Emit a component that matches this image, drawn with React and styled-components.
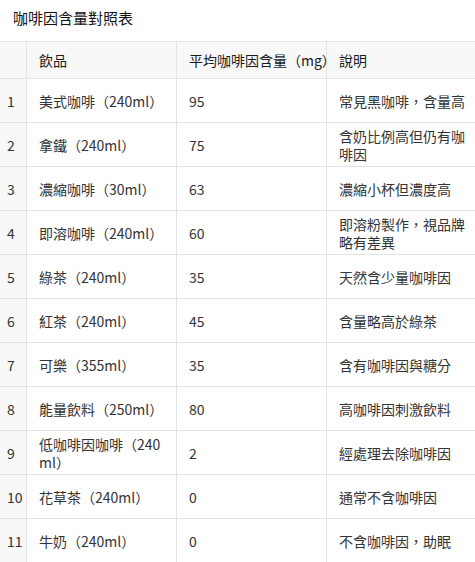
import React from 'react';
import styled, { createGlobalStyle } from 'styled-components';

const GlobalStyle = createGlobalStyle`
  html, body {
    margin: 0;
    padding: 0;
    background: #ffffff;
    overflow: hidden;
  }
  body {
    font-family: "Noto Sans CJK TC", "Noto Sans", "Liberation Sans", sans-serif;
    color: #333;
  }
`;

const Page = styled.div`
  width: 475px;
  height: 562px;
  overflow: hidden;
`;

const Title = styled.div`
  height: 41px;
  box-sizing: border-box;
  padding: 6px 0 0 13px;
  font-size: 15px;
  font-weight: 400;
  color: #111;
  line-height: 24px;
`;

const Grid = styled.div`
  display: grid;
  grid-template-columns: 27px 150px 150px 150px;
  grid-template-rows: 37px;
  grid-auto-rows: 44px;
  width: 477px;
  border-top: 1px solid #e3e3e3;
`;

const Cell = styled.div`
  display: flex;
  align-items: center;
  box-sizing: border-box;
  padding: 0 ${p => (p.index ? '0 0 7px' : '11px 0 12px')};
  border-bottom: 1px solid #e3e3e3;
  border-right: 1px solid #e3e3e3;
  background: ${p => (p.head || p.index ? '#f8f8f8' : '#ffffff')};
  font-size: 14px;
  line-height: 18px;
  color: ${p => (p.head ? '#1a1a1a' : '#333')};
  white-space: ${p => (p.head ? 'nowrap' : 'normal')};
  word-break: break-all;
`;

const rows = [
  ['美式咖啡（240ml）', '95', '常見黑咖啡，含量高'],
  ['拿鐵（240ml）', '75', '含奶比例高但仍有咖啡因'],
  ['濃縮咖啡（30ml）', '63', '濃縮小杯但濃度高'],
  ['即溶咖啡（240ml）', '60', '即溶粉製作，視品牌略有差異'],
  ['綠茶（240ml）', '35', '天然含少量咖啡因'],
  ['紅茶（240ml）', '45', '含量略高於綠茶'],
  ['可樂（355ml）', '35', '含有咖啡因與糖分'],
  ['能量飲料（250ml）', '80', '高咖啡因刺激飲料'],
  ['低咖啡因咖啡（240ml）', '2', '經處理去除咖啡因'],
  ['花草茶（240ml）', '0', '通常不含咖啡因'],
  ['牛奶（240ml）', '0', '不含咖啡因，助眠'],
];

export default function App() {
  return (
    <Page>
      <GlobalStyle />
      <Title>咖啡因含量對照表</Title>
      <Grid>
        <Cell index head />
        <Cell head>飲品</Cell>
        <Cell head>平均咖啡因含量（mg）</Cell>
        <Cell head>說明</Cell>
        {rows.map((r, i) => (
          <React.Fragment key={i}>
            <Cell index>{i + 1}</Cell>
            <Cell>{r[0]}</Cell>
            <Cell>{r[1]}</Cell>
            <Cell>{r[2]}</Cell>
          </React.Fragment>
        ))}
      </Grid>
    </Page>
  );
}
